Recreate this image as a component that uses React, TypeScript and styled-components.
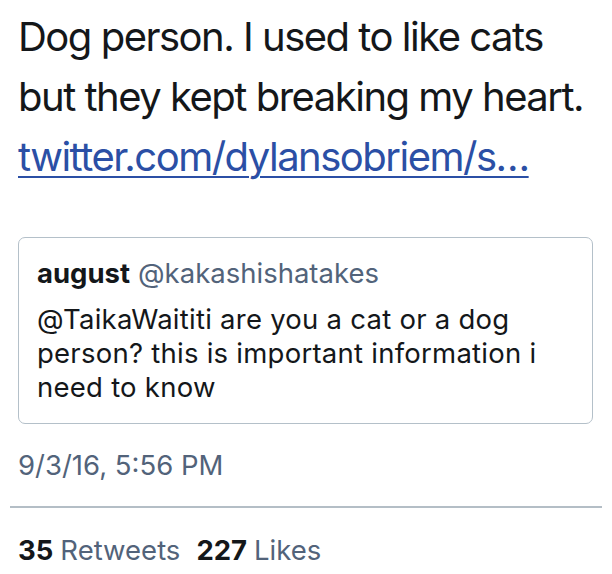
import styled, { createGlobalStyle } from 'styled-components';

const GlobalStyle = createGlobalStyle`
  html, body {
    margin: 0;
    padding: 0;
    background: #ffffff;
  }
  body {
    font-family: Inter, "Noto Sans", Roboto, sans-serif;
    -webkit-font-smoothing: antialiased;
  }
`;

const Tweet = styled.article`
  padding: 7px 19px 0 18px;
  color: #14171a;
`;

const Text = styled.p`
  margin: 0;
  font-size: 40px;
  line-height: 60px;
  letter-spacing: -1.5px;
  color: #14171a;
`;

const Link = styled.a`
  color: #2b4fa5;
  text-decoration: underline;
  text-decoration-thickness: 2px;
  text-underline-offset: 5px;
`;

const Quote = styled.div`
  margin-top: 50px;
  border: 1px solid #b4c0c9;
  border-radius: 7px;
  padding: 18px 18px 19px 18px;
`;

const QuoteHeader = styled.div`
  display: flex;
  gap: 8px;
  font-size: 27.5px;
  line-height: 34px;
  margin-bottom: 12px;
`;

const Name = styled.span`
  font-weight: 700;
  color: #14171a;
`;

const Handle = styled.span`
  color: #52637a;
`;

const QuoteBody = styled.p`
  margin: 0;
  font-size: 27.5px;
  line-height: 34px;
  letter-spacing: 0.25px;
  color: #14171a;
`;

const Meta = styled.div`
  margin-top: 24px;
  font-size: 27.5px;
  line-height: 34px;
  color: #52637a;
`;

const Divider = styled.hr`
  margin: 24px -9px 0 -8px;
  border: none;
  border-top: 2px solid #b4bec6;
`;

const Stats = styled.div`
  display: flex;
  gap: 16px;
  margin-top: 25px;
  font-size: 27.5px;
  line-height: 34px;
`;

const Stat = styled.span`
  color: #52637a;
`;

const Count = styled.strong`
  font-weight: 700;
  color: #14171a;
  margin-right: 7px;
`;

export default function App() {
  return (
    <>
      <GlobalStyle />
      <Tweet>
        <Text>
          Dog person. I used to like cats but they kept breaking my heart.{' '}
          <Link href="#">twitter.com/dylansobriem/s…</Link>
        </Text>
        <Quote>
          <QuoteHeader>
            <Name>august</Name>
            <Handle>@kakashishatakes</Handle>
          </QuoteHeader>
          <QuoteBody>
            @TaikaWaititi are you a cat or a dog person? this is important
            information i need to know
          </QuoteBody>
        </Quote>
        <Meta>9/3/16, 5:56 PM</Meta>
        <Divider />
        <Stats>
          <Stat>
            <Count>35</Count>Retweets
          </Stat>
          <Stat>
            <Count>227</Count>Likes
          </Stat>
        </Stats>
      </Tweet>
    </>
  );
}
